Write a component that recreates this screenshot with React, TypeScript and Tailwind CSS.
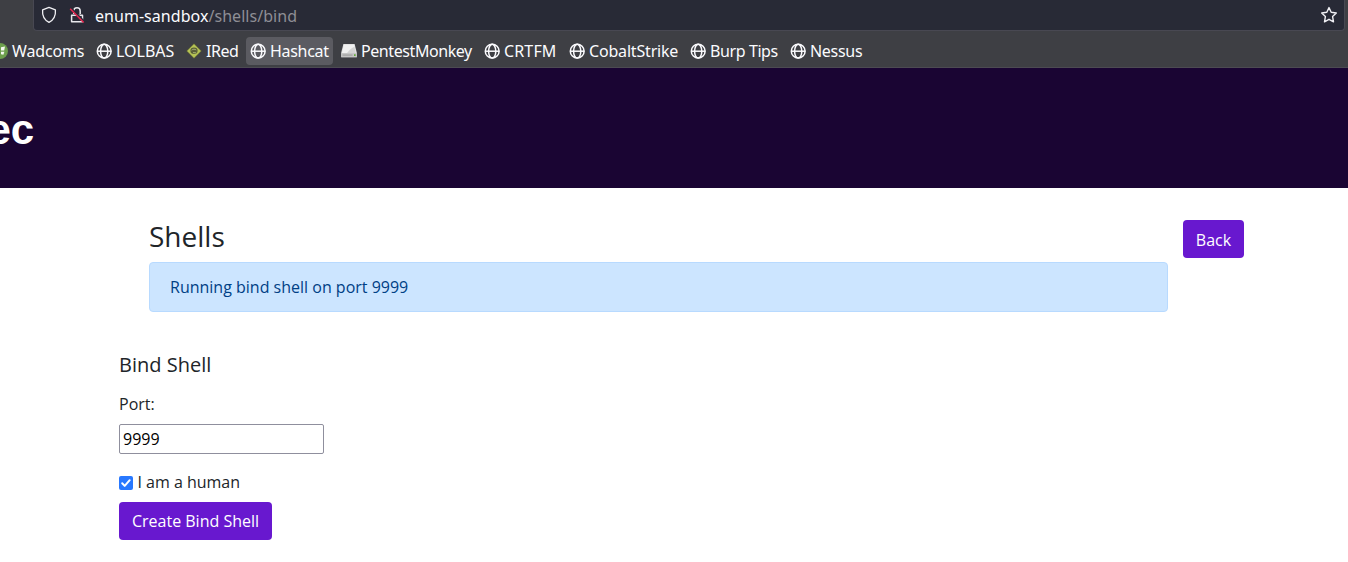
import React from "react";

function Globe() {
  return (
    <svg width="16" height="16" viewBox="0 0 16 16" fill="none" stroke="#fbfbfe" strokeWidth="1.5">
      <circle cx="8.2" cy="8.2" r="6.9" />
      <ellipse cx="8.2" cy="8.2" rx="3.6" ry="6.9" />
      <path d="M1.3 8.2h14" />
    </svg>
  );
}

function WindowsBadge() {
  return (
    <svg width="16" height="16" viewBox="0 0 16 16">
      <circle cx="8" cy="8" r="8" fill="#6d9f4d" />
      <path d="M4 5.5l4-1v3.2H4zM9 4.3l4-.8-.8 4H9zM4 8.7h4v3.1l-4-1zM9 8.7h3.4l-1 3-2.4-.4z" fill="#f4f8f0" />
    </svg>
  );
}

function Diamond() {
  return (
    <svg width="16" height="16" viewBox="0 0 16 16">
      <path d="M8 0L16 8 8 16 0 8z" fill="#4f5235" />
      <path d="M8 1L15 8 8 15 1 8z" fill="#b5c254" />
      <ellipse cx="8" cy="7.8" rx="3.6" ry="3.3" fill="#5a5e38" />
      <path d="M5.6 7.2c1.2-1.2 3.4-1.3 4.6-.2M7 9.6l3.2.2" fill="none" stroke="#adb977" strokeWidth=".9" />
    </svg>
  );
}

function Drive() {
  return (
    <svg width="16" height="16" viewBox="0 0 16 16">
      <path d="M2.4 1h11.2L15.8 9.5v4.7H.2V9.5z" fill="#d6d6d6" />
      <path d="M2.8 1.4h10.4l1.9 8.6H.9z" fill="#f1f1f1" />
      <path d="M6 10C8 7.4 10 5 13.4 3.7l1.3 6.3z" fill="#d4d4d4" />
      <path d="M.2 10h15.6v4.2H.2z" fill="#c5c5c5" />
      <path d="M1.5 11.3h10v1.6h-10z" fill="#aaa" />
      <path d="M13 11.3h1.6v1.6H13z" fill="#60aa35" />
    </svg>
  );
}

const bookmarks = [
  { label: "Wadcoms", Icon: WindowsBadge, box: "w-[100px]", spacing: "tracking-[-0.15px]" },
  { label: "LOLBAS", Icon: Globe, box: "w-[86px]", spacing: "tracking-[0px]" },
  { label: "IRed", Icon: Diamond, box: "w-[60px]", spacing: "tracking-[-0.45px]" },
  { label: "Hashcat", Icon: Globe, box: "w-[87px] bg-[#5b5b61]", spacing: "tracking-[-0.3px]" },
  { label: "PentestMonkey", Icon: Drive, box: "w-[139px]", spacing: "tracking-[-0.42px]" },
  { label: "CRTFM", Icon: Globe, box: "w-[81px]", spacing: "tracking-[0.15px]" },
  { label: "CobaltStrike", Icon: Globe, box: "w-[117px]", spacing: "tracking-[-0.18px]" },
  { label: "Burp Tips", Icon: Globe, box: "w-[96px]", spacing: "tracking-[-0.4px]" },
  { label: "Nessus", Icon: Globe, box: "w-[81px]", spacing: "tracking-[-0.3px]" },
];

function AddressBar() {
  return (
    <div className="ml-[33px] mr-[3px] flex h-[31px] items-center rounded-b-[4px] border border-t-0 border-[#484852] bg-[#282a36] pl-[7px] pr-[6px]">
      <svg width="16" height="18" viewBox="0 0 16 18" fill="none" stroke="#f0f0f4" strokeWidth="1.3" strokeLinejoin="round">
        <path d="M8 1.4l6.4 2.5c.5 5.8-1.1 9.8-6.4 12.5C2.7 13.7 1.1 9.7 1.6 3.9z" />
      </svg>
      <svg className="ml-3" width="16" height="18" viewBox="0 0 16 18" fill="none" strokeLinejoin="round">
        <path d="M4.8 8V5a3.2 3.2 0 0 1 6.4 0v3M2.6 9.2h10.9v6.5H2.6z" stroke="#e7e7ec" strokeWidth="1.5" />
        <path d="M2.2 2.5l13 13.5" stroke="#282a36" strokeWidth="2.4" />
        <path d="M1.2 2.7l13.5 13.8" stroke="#e22850" strokeWidth="1.6" />
      </svg>
      <div className="ml-[10px] flex-1 whitespace-nowrap pt-[2px] text-[16px] leading-[22px] tracking-[0.04px] text-[#fbfbfe]">
        enum-sandbox<span className="text-[#8e8e95]">/shells/bind</span>
      </div>
      <svg width="18" height="18" viewBox="0 0 18 18" fill="none" stroke="#f0f0f4" strokeWidth="1.4" strokeLinejoin="round">
        <path d="M9 1.6l2.2 4.7 5.1.7-3.7 3.6.9 5.2L9 13.3l-4.5 2.5.9-5.2L1.7 7l5.1-.7z" />
      </svg>
    </div>
  );
}

export default function App() {
  return (
    <div className="h-[562px] w-full overflow-hidden bg-white font-['Open_Sans',sans-serif] text-base text-[#212529]">
      <div className="h-[68px] overflow-hidden border-b border-[#4c4b52] bg-[#3e3f44] font-['Noto_Sans',sans-serif]">
        <AddressBar />
        <nav className="-ml-3 mt-[6px] flex gap-1">
          {bookmarks.map(({ label, Icon, box, spacing }) => (
            <div key={label} className={`flex h-7 shrink-0 items-center gap-1 rounded-[4px] px-1 text-[#fbfbfe] ${box}`}>
              <span className="shrink-0"><Icon /></span>
              <span className={`whitespace-nowrap text-[16px] leading-[22px] ${spacing}`}>{label}</span>
            </div>
          ))}
        </nav>
      </div>

      <header className="flex h-[120px] items-center overflow-hidden bg-[#1a0533] pt-1">
        <span className="-ml-[12.5px] font-['Liberation_Sans',sans-serif] text-[42px] font-bold leading-[48px] text-white">ec</span>
      </header>

      <main className="pl-[119px] pr-[104px] pt-8">
        <div className="flex items-start pl-[30px]">
          <div className="w-[1019px] shrink-0">
            <h1 className="mb-[9px] text-[28px] font-normal leading-[33px]">Shells</h1>
            <div className="h-[50px] rounded-[4px] border border-[#b8daff] bg-[#cce5ff] px-5 py-3 leading-6 text-[#004085]">
              Running bind shell on port 9999
            </div>
          </div>
          <button className="ml-[15px] h-[38px] w-[61px] shrink-0 rounded-[4px] bg-[#6818cf] pt-[2px] text-center leading-6 text-white">Back</button>
        </div>

        <form className="mt-[41px] flex flex-col items-start" onSubmit={(e) => e.preventDefault()}>
          <h2 className="text-[20px] font-normal leading-6">Bind Shell</h2>
          <label htmlFor="port" className="mt-[15px] leading-6">Port:</label>
          <input id="port" defaultValue="9999" className="mt-2 h-[30px] w-[205px] rounded-[2px] border border-[#8f8f9d] bg-white px-[3px] text-black outline-none" />
          <label className="mt-4 flex h-6 items-center gap-[4.4px]">
            <svg className="mt-[2px]" width="14" height="14" viewBox="0 0 14 14">
              <rect width="14" height="14" rx="2" fill="#2878ff" />
              <path d="M3.2 7.3l2.5 2.6 5-5.7" fill="none" stroke="white" strokeWidth="2" strokeLinecap="round" strokeLinejoin="round" />
            </svg>
            <span>I am a human</span>
          </label>
          <button className="mt-2 h-[38px] w-[153px] rounded-[4px] bg-[#6818cf] text-center leading-6 text-white">Create Bind Shell</button>
        </form>
      </main>
    </div>
  );
}
